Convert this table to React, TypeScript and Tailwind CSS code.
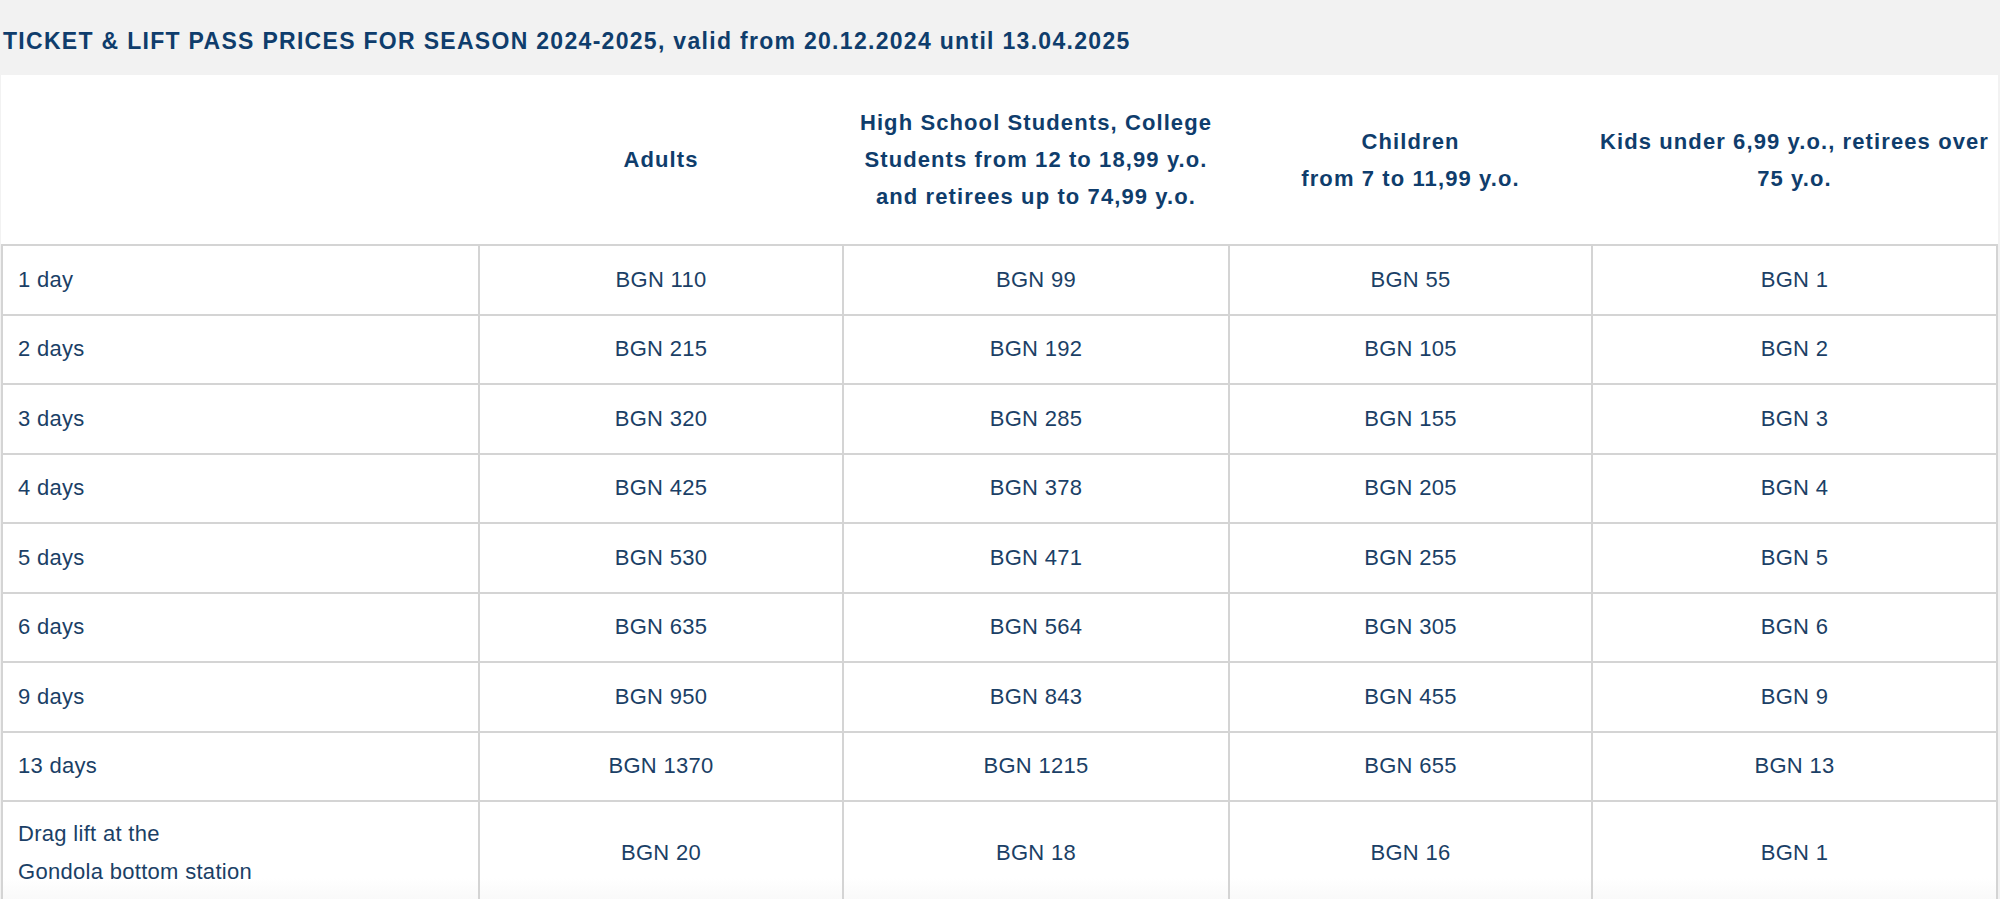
const rows: [string, string, string, string, string][] = [
  ['1 day', 'BGN 110', 'BGN 99', 'BGN 55', 'BGN 1'],
  ['2 days', 'BGN 215', 'BGN 192', 'BGN 105', 'BGN 2'],
  ['3 days', 'BGN 320', 'BGN 285', 'BGN 155', 'BGN 3'],
  ['4 days', 'BGN 425', 'BGN 378', 'BGN 205', 'BGN 4'],
  ['5 days', 'BGN 530', 'BGN 471', 'BGN 255', 'BGN 5'],
  ['6 days', 'BGN 635', 'BGN 564', 'BGN 305', 'BGN 6'],
  ['9 days', 'BGN 950', 'BGN 843', 'BGN 455', 'BGN 9'],
  ['13 days', 'BGN 1370', 'BGN 1215', 'BGN 655', 'BGN 13'],
]

export default function App() {
  return (
    <div className="min-h-screen bg-[#f2f2f2] font-['Liberation_Sans',Arial,sans-serif] text-[#1b3f66]">
      {/* Title */}
      <h1 className="h-[75px] pl-[3px] pt-[26px] text-[23px] font-bold leading-[30px] tracking-[1.3px] text-[#0f3d6c]">
        TICKET &amp; LIFT PASS PRICES FOR SEASON 2024-2025, valid from 20.12.2024 until 13.04.2025
      </h1>

      {/* Price table */}
      <div className="pl-px pr-[2px]">
        <table className="w-full table-fixed border-collapse bg-white">
          <colgroup>
            <col className="w-[477px]" />
            <col className="w-[364px]" />
            <col className="w-[386px]" />
            <col className="w-[363px]" />
            <col />
          </colgroup>
          <thead>
            <tr className="h-[170px] border-b-2 border-[#d4d4d4] text-[22px] font-bold leading-[37px] tracking-[1.1px] text-[#0f3d6c]">
              <th></th>
              <th className="text-center align-middle">Adults</th>
              <th className="text-center align-middle">
                High School Students, College
                <br />
                Students from 12 to 18,99 y.o.
                <br />
                and retirees up to 74,99 y.o.
              </th>
              <th className="text-center align-middle">
                Children
                <br />
                from 7 to 11,99 y.o.
              </th>
              <th className="text-center align-middle">
                Kids under 6,99 y.o., retirees over
                <br />
                75 y.o.
              </th>
            </tr>
          </thead>
          <tbody className="text-[22px] leading-[38px] tracking-[0.3px]">
            {rows.map(([label, ...prices]) => (
              <tr key={label} className="h-[69.5px]">
                <td className="border-2 border-[#d4d4d4] pl-[15px] align-middle">{label}</td>
                {prices.map((p, i) => (
                  <td key={i} className="border-2 border-[#d4d4d4] text-center align-middle">
                    {p}
                  </td>
                ))}
              </tr>
            ))}
            <tr className="h-[110px] bg-gradient-to-b from-white from-70% to-[#f6f6f6]">
              <td className="border-2 border-[#d4d4d4] pl-[15px] align-top pt-[13px]">
                Drag lift at the
                <br />
                Gondola bottom station
              </td>
              <td className="border-2 border-[#d4d4d4] text-center align-top pt-[32px]">BGN 20</td>
              <td className="border-2 border-[#d4d4d4] text-center align-top pt-[32px]">BGN 18</td>
              <td className="border-2 border-[#d4d4d4] text-center align-top pt-[32px]">BGN 16</td>
              <td className="border-2 border-[#d4d4d4] text-center align-top pt-[32px]">BGN 1</td>
            </tr>
          </tbody>
        </table>
      </div>
    </div>
  )
}
